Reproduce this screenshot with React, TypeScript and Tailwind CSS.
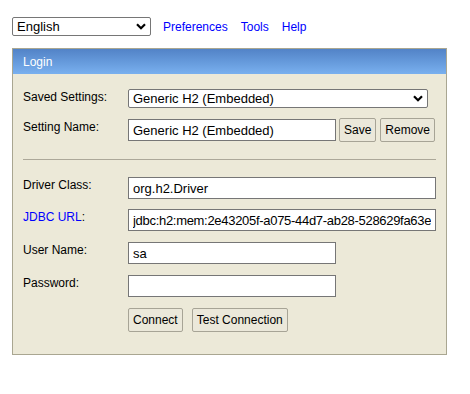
import React from "react";

function Chevron() {
  return (
    <svg width="10" height="7" viewBox="0 0 10 7" className="shrink-0">
      <path d="M1 1.2 L5 5.2 L9 1.2" fill="none" stroke="#000" strokeWidth="2.2" />
    </svg>
  );
}

function Select({ value, className }: { value: string; className: string }) {
  return (
    <div
      className={`flex items-center h-[19px] border border-[#767676] rounded-[2px] bg-white pr-[4px] ${className}`}
    >
      <select
        className="flex-1 min-w-0 appearance-none bg-transparent outline-none pl-[4px] text-[13px] leading-[17px] text-black"
        defaultValue={value}
      >
        <option>{value}</option>
      </select>
      <Chevron />
    </div>
  );
}

function Field({ value, type = "text", className }: { value: string; type?: string; className: string }) {
  return (
    <input
      type={type}
      readOnly
      value={value}
      className={`h-[22px] border border-[#767676] bg-white px-[4px] text-[13px] text-black outline-none ${className}`}
    />
  );
}

function Btn({ label }: { label: string }) {
  return (
    <button className="h-[24px] px-[4px] border border-[#a7a496] rounded-[2px] bg-[#ebe8da] text-[12px] text-black">
      {label}
    </button>
  );
}

function Row({ label, children, className = "" }: { label: React.ReactNode; children: React.ReactNode; className?: string }) {
  return (
    <div className={`flex items-start ${className}`}>
      <div className="w-[105px] shrink-0 pt-[1px] leading-[14px] text-black">{label}</div>
      {children}
    </div>
  );
}

export default function App() {
  return (
    <div className="min-h-screen bg-white font-['Liberation_Sans',Arial,sans-serif] text-[12px] pl-[12px] pt-[17px]">
      <div className="flex items-center gap-[12px]">
        <Select value="English" className="w-[139px]" />
        <div className="flex items-center gap-[13px] text-[#0000ff] leading-[14px]">
          <a>Preferences</a>
          <a>Tools</a>
          <a>Help</a>
        </div>
      </div>

      <div className="mt-[12px] w-[435px] border border-[#a9a691] bg-[#ece9d8]">
        <div className="h-[25px] flex items-center pl-[10px] text-white bg-gradient-to-b from-[#5283c7] to-[#79b0ef]">
          Login
        </div>

        <div className="pl-[10px] pr-[10px] pt-[15px] pb-[22px]">
          <Row label="Saved Settings:">
            <Select value="Generic H2 (Embedded)" className="w-[300px]" />
          </Row>

          <div className="flex items-start mt-[10px]">
            <div className="w-[105px] shrink-0 pt-[2px] leading-[14px]">Setting Name:</div>
            <div className="flex items-center">
              <Field value="Generic H2 (Embedded)" className="w-[208px]" />
              <div className="ml-[3px] flex gap-[4px]">
                <Btn label="Save" />
                <Btn label="Remove" />
              </div>
            </div>
          </div>

          <div className="mt-[17px] h-px bg-[#aca899]" />

          <Row label="Driver Class:" className="mt-[17px]">
            <Field value="org.h2.Driver" className="w-[308px]" />
          </Row>
          <Row
            label={
              <>
                <a className="text-[#0000ff]">JDBC URL</a>:
              </>
            }
            className="mt-[10px]"
          >
            <Field
              value="jdbc:h2:mem:2e43205f-a075-44d7-ab28-528629fa63e5"
              className="w-[308px] tracking-[-0.3px]"
            />
          </Row>
          <Row label="User Name:" className="mt-[11px]">
            <Field value="sa" className="w-[208px]" />
          </Row>
          <Row label="Password:" className="mt-[11px]">
            <Field value="" type="password" className="w-[208px]" />
          </Row>
          <div className="flex mt-[11px] pl-[105px] gap-[9px]">
            <Btn label="Connect" />
            <Btn label="Test Connection" />
          </div>
        </div>
      </div>
    </div>
  );
}
